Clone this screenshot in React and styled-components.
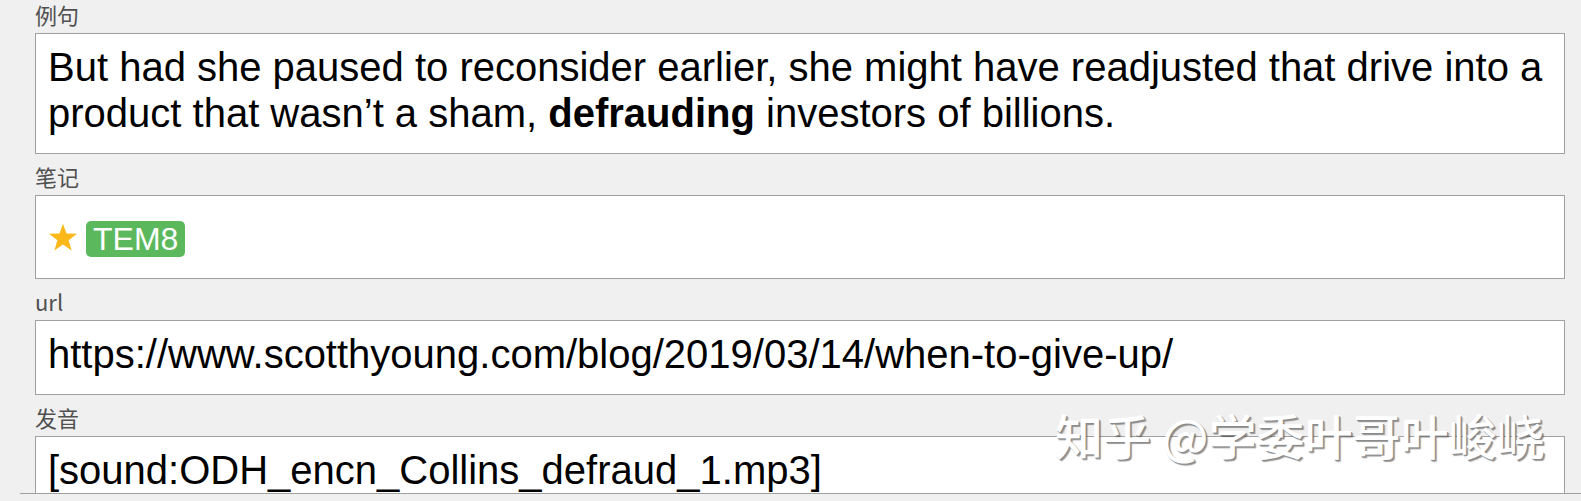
import styled, { createGlobalStyle } from 'styled-components'

const GlobalStyle = createGlobalStyle`
  html, body {
    margin: 0;
    padding: 0;
    background-color: #f0f0f0;
    overflow: hidden;
  }
`

const Page = styled.div`
  position: relative;
  height: 501px;
  background-color: #f0f0f0;
`

const Editor = styled.div`
  height: 493px;
  margin-left: 20px;
  padding: 0 16px 0 15px;
  border-bottom: 1px solid #a0a0a0;
  overflow: hidden;
`

const Fields = styled.div`
  display: flex;
  flex-direction: column;
`

const Field = styled.div`
  display: flex;
  flex-direction: column;

  & + & {
    margin-top: 8px;
  }
`

const Label = styled.div`
  font-family: "Noto Sans CJK SC", "Noto Sans", sans-serif;
  font-size: 22px;
  line-height: 28px;
  color: #505050;
  margin-bottom: 5px;
`

const Box = styled.div`
  background-color: #fff;
  border: 1px solid #a0a0a0;
  padding: 10px 12px 17px;
  font-family: "Liberation Sans", Arial, sans-serif;
  font-size: 40px;
  line-height: 46px;
  color: #000;
  white-space: pre-wrap;
`

const TagBox = styled(Box)`
  display: flex;
  align-items: flex-start;
  gap: 8px;
  padding: 25px 12px 21px;
`

const Star = styled.svg`
  width: 30px;
  height: 29px;
  margin-top: 2px;
  flex-shrink: 0;
`

const Tag = styled.span`
  display: inline-block;
  background-color: #5cb85c;
  color: #fff;
  font-size: 32px;
  line-height: 32px;
  padding: 2px 7px;
  border-radius: 5px;
`

const Watermark = styled.div`
  position: absolute;
  top: 408px;
  left: 1055px;
  font-family: "Noto Sans CJK SC", sans-serif;
  font-size: 48px;
  line-height: 52px;
  font-weight: 500;
  color: #fff;
  white-space: nowrap;
  text-shadow: 1px 1px 0 #8a8a8a, 2px 2px 1px rgba(0, 0, 0, 0.4);
  pointer-events: none;
`

const fields = [
  {
    label: '例句',
    content: (
      <>
        But had she paused to reconsider earlier, she might have readjusted that drive into a product that wasn’t a sham, <b>defrauding</b> investors of billions.
      </>
    ),
  },
  { label: '笔记', tags: ['TEM8'] },
  { label: 'url', content: 'https://www.scotthyoung.com/blog/2019/03/14/when-to-give-up/' },
  { label: '发音', content: '[sound:ODH_encn_Collins_defraud_1.mp3]' },
]

const StarIcon = () => (
  <Star viewBox="0 0 24 23">
    <path
      d="M12 0.5 L14.8 8.3 L23.2 8.5 L16.5 13.6 L18.9 21.8 L12 17 L5.1 21.8 L7.5 13.6 L0.8 8.5 L9.2 8.3 Z"
      fill="#fbb818"
    />
  </Star>
)

const App = () => {
  return (
    <Page>
      <GlobalStyle />
      <Editor>
        <Fields>
          {fields.map(field => (
            <Field key={field.label}>
              <Label>{field.label}</Label>
              {field.tags ? (
                <TagBox>
                  <StarIcon />
                  {field.tags.map(tag => (
                    <Tag key={tag}>{tag}</Tag>
                  ))}
                </TagBox>
              ) : (
                <Box>{field.content}</Box>
              )}
            </Field>
          ))}
        </Fields>
      </Editor>
      <Watermark>知乎 @学委叶哥叶峻峣</Watermark>
    </Page>
  )
}

export default App
